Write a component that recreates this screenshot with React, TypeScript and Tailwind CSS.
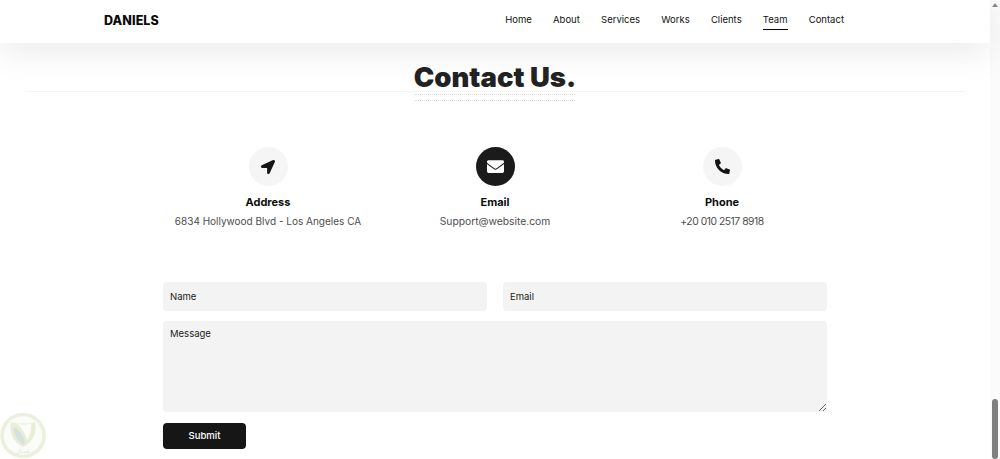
import React from "react";
import { FaLocationArrow, FaEnvelope, FaPhoneAlt } from "react-icons/fa";

const body = { fontFamily: '"Inter", "Open Sans", sans-serif' };
const links = ["Home", "About", "Services", "Works", "Clients", "Team", "Contact"];
const infos = [
  { title: "Address", text: "6834 Hollywood Blvd - Los Angeles CA", Icon: FaLocationArrow, active: false, size: 14, cls: "text-[10px]" },
  { title: "Email", text: "Support@website.com", Icon: FaEnvelope, active: true, size: 17, cls: "text-[10.3px]" },
  { title: "Phone", text: "+20 010 2517 8918", Icon: FaPhoneAlt, active: false, size: 15, cls: "text-[10.3px] tracking-[-0.45px]" },
];

function Watermark() {
  return (
    <div className="absolute left-0 bottom-0 h-[47px] w-[47px]">
      <svg width="47" height="47" viewBox="0 0 47 47">
        <circle cx="23" cy="23.5" r="21" fill="#fbfcf8" stroke="#e9f0dc" strokeWidth="3.5" />
        <path d="M11 10 C18 12 28 12 35 10 C37 21 33 30 23 35 C13 30 9 21 11 10Z" fill="#e6eed6" />
        <path d="M16 11 C21 13 27 13 31 11 C32 18 30 24 27 28 C25 20 21 15 16 11Z" fill="#fbfcf8" />
        <path d="M14 15 C20 18 25 25 24.5 33 C18 30 14 23 14 15Z" fill="#d6e0e0" />
        <text x="23" y="41" textAnchor="middle" fontSize="5" fill="#d9e2cb" fontFamily="DejaVu Sans, sans-serif">كسـال</text>
      </svg>
    </div>
  );
}

export default function App() {
  return (
    <div className="relative flex h-[459px] w-[1000px] overflow-hidden bg-white text-black" style={body}>
      <main className="flex min-w-0 flex-1 flex-col">
        <header className="z-10 flex h-[43px] shrink-0 items-center justify-between bg-white pl-[104px] pr-[146px] shadow-[0_8px_36px_rgba(0,0,0,0.09)]">
          <div className="text-[12.5px] font-extrabold tracking-[0.1px] text-[#0b0b0b]">DANIELS</div>
          <nav className="flex items-start gap-[21.2px] self-start pt-[13px] text-[9.5px] leading-[14px] text-[#111]">
            {links.map((l) => (
              <a key={l} className={l === "Team" ? "h-[16.5px] border-b-[1.5px] border-black" : "h-[16.5px]"}>
                {l}
              </a>
            ))}
          </nav>
        </header>

        <section className="relative flex h-[48px] shrink-0 flex-col items-center pt-[18px]">
          <h1 className="relative z-10 text-[27.5px] leading-[33px] font-black text-[#222]">Contact Us.</h1>
          <div className="h-[7px] w-[160px] shrink-0 border-y border-dotted border-[#dcdcdc]" />
        </section>
        <div className="mx-[25px] h-px shrink-0 bg-[#f4f4f4]" />

        <section className="mx-auto mt-[55px] grid w-[681px] shrink-0 grid-cols-3">
          {infos.map(({ title, text, Icon, active, size, cls }) => (
            <div key={title} className="flex flex-col items-center">
              <div className={`flex h-[39px] w-[39px] items-center justify-center rounded-full ${active ? "bg-[#1b1b1b] text-white" : "bg-[#f5f5f5] text-[#141414]"}`}>
                <Icon size={size} />
              </div>
              <div className="mt-[9px] text-[11px] leading-[14px] font-bold text-[#0c0c0c]">{title}</div>
              <div className={`mt-[5px] leading-[14px] text-[#4d4d4d] ${cls}`}>{text}</div>
            </div>
          ))}
        </section>

        <form className="mx-auto mt-[54px] flex w-[664px] shrink-0 flex-col">
          <div className="grid grid-cols-2 gap-4">
            <input placeholder="Name" className="h-[29px] rounded-[4px] bg-[#f3f3f3] px-[7px] text-[9.5px] outline-none placeholder:text-[#222]" />
            <input placeholder="Email" className="h-[29px] rounded-[4px] bg-[#f3f3f3] px-[7px] text-[9.5px] outline-none placeholder:text-[#222]" />
          </div>
          <textarea placeholder="Message" className="mt-[10px] block h-[91px] resize-y rounded-[4px] bg-[#f3f3f3] px-[7px] py-[6px] text-[9.5px] outline-none placeholder:text-[#222]" />
          <button type="button" className="mt-[11px] h-[26px] w-[83px] rounded-[4px] bg-[#161616] text-[9.5px] font-medium text-white">
            Submit
          </button>
        </form>
      </main>

      <aside className="flex h-full w-[10px] shrink-0 flex-col items-center justify-between bg-[#fbfbfb]">
        <div className="mt-[3px] h-0 w-0 border-x-[3.5px] border-b-[4px] border-x-transparent border-b-[#8a8a8a]" />
        <div className="h-[60px] w-[6px] rounded-full bg-[#7f7f7f]" />
      </aside>

      <Watermark />
    </div>
  );
}
